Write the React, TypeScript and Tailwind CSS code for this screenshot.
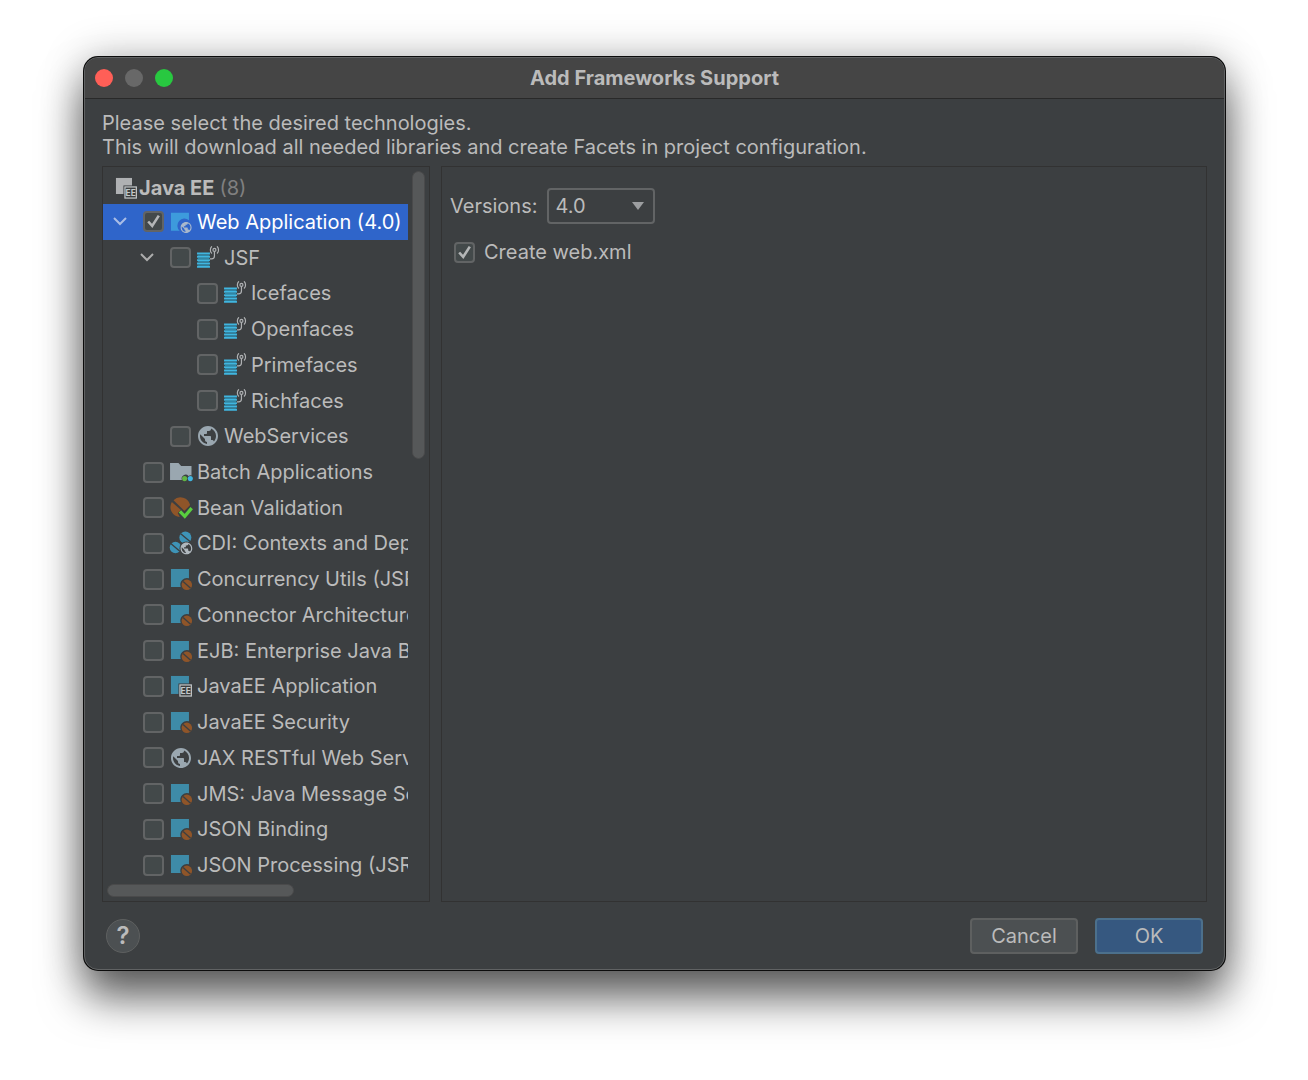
import React from 'react';
import { MdPublic } from 'react-icons/md';

type IconName = 'web' | 'jsf' | 'globe' | 'batch' | 'beanCheck' | 'cdi' | 'module' | 'moduleEE';

interface Technology {
  id: string;
  label: string;
  icon: IconName;
  level: 1 | 2 | 3;
  expanded?: boolean;
  checked?: boolean;
}

const technologies: Technology[] = [
  { id: 'web', label: 'Web Application (4.0)', icon: 'web', level: 1, expanded: true, checked: true },
  { id: 'jsf', label: 'JSF', icon: 'jsf', level: 2, expanded: true },
  { id: 'icefaces', label: 'Icefaces', icon: 'jsf', level: 3 },
  { id: 'openfaces', label: 'Openfaces', icon: 'jsf', level: 3 },
  { id: 'primefaces', label: 'Primefaces', icon: 'jsf', level: 3 },
  { id: 'richfaces', label: 'Richfaces', icon: 'jsf', level: 3 },
  { id: 'webservices', label: 'WebServices', icon: 'globe', level: 2 },
  { id: 'batch', label: 'Batch Applications', icon: 'batch', level: 1 },
  { id: 'validation', label: 'Bean Validation', icon: 'beanCheck', level: 1 },
  { id: 'cdi', label: 'CDI: Contexts and Dependency Injection', icon: 'cdi', level: 1 },
  { id: 'concurrency', label: 'Concurrency Utils (JSR 236)', icon: 'module', level: 1 },
  { id: 'connector', label: 'Connector Architecture (JSR 322)', icon: 'module', level: 1 },
  { id: 'ejb', label: 'EJB: Enterprise Java Beans', icon: 'module', level: 1 },
  { id: 'javaee', label: 'JavaEE Application', icon: 'moduleEE', level: 1 },
  { id: 'security', label: 'JavaEE Security', icon: 'module', level: 1 },
  { id: 'jax', label: 'JAX RESTful Web Services', icon: 'globe', level: 1 },
  { id: 'jms', label: 'JMS: Java Message Service', icon: 'module', level: 1 },
  { id: 'jsonb', label: 'JSON Binding', icon: 'module', level: 1 },
  { id: 'jsonp', label: 'JSON Processing (JSR 353)', icon: 'module', level: 1 },
];

const indents = { 1: 'pl-0', 2: 'pl-[27px]', 3: 'pl-[54px]' };

const EEBadge = ({ color }: { color: string }) => (
  <>
    <rect x="6.3" y="6.3" width="9.7" height="9.7" fill="#3c3f41" />
    <rect x="7.3" y="7.3" width="7.6" height="7.4" fill="none" stroke={color} strokeWidth="0.8" />
    <text x="11.1" y="13.1" textAnchor="middle" fontSize="5.6" fontWeight="700" fill={color}>EE</text>
  </>
);

const TechIcon = ({ name }: { name: IconName }) => {
  if (name === 'globe') return <MdPublic className="size-6 shrink-0 text-[#9aa7b0]" />;

  return (
    <svg viewBox="0 0 16 16" className="size-6 shrink-0" aria-hidden="true">
      {name === 'web' && (
        <>
          <path d="M1.3 1.8h12v5.1a4.6 4.6 0 0 0-6.2 6.9H1.3z" fill="#3d9bdc" />
          <svg x="7" y="7.2" width="8.8" height="8.8" viewBox="0 0 24 24">
            <MdPublic size={24} color="#a9b8cc" />
          </svg>
        </>
      )}
      {name === 'jsf' && (
        <>
          <path d="M0.7 5h8.6M0.7 7.2h8.6M0.7 9.4h8.6M0.7 11.6h8.6M0.7 13.8h8.6" stroke="#40b6e0" strokeWidth="1.3" />
          <path d="M1.2 6.1h7.6M1.2 8.3h7.6M1.2 10.5h7.6M1.2 12.7h7.6" stroke="#2f86a5" strokeWidth="1" />
          <g fill="none" stroke="#afb1b3" strokeWidth="0.8">
            <path d="M9.3 8.6h1.1a1.9 1.9 0 0 0 1.9-1.9V3.6" />
            <circle cx="12.3" cy="2.6" r="1" />
            <path d="M10.6 0.2a3.3 3.3 0 0 0 0 4.8M14 0.2a3.3 3.3 0 0 1 0 4.8" />
          </g>
        </>
      )}
      {name === 'batch' && (
        <>
          <path d="M0.7 2h5.6l1.8 2h6.9v6.3a2.6 2.6 0 0 0-2 .4 2.6 2.6 0 0 0-4.4 2.6H0.7z" fill="#9aa7b0" />
          <circle cx="10.4" cy="12.4" r="1.7" fill="#62b543" />
          <circle cx="14.2" cy="12.4" r="1.7" fill="#40b6e0" />
        </>
      )}
      {name === 'beanCheck' && (
        <>
          <path d="M3 2.8A6.6 6.6 0 0 1 14.1 6L10.2 10 9 8.6z" fill="#8f5529" />
          <path d="M1.9 4A6.6 6.6 0 0 0 7.2 14l-1.4-2.7 2.2-2z" fill="#8f5529" />
          <path d="M7.3 10.3l3.2 3.3 4.6-5.5" fill="none" stroke="#59cf3f" strokeWidth="2.2" />
        </>
      )}
      {name === 'cdi' && (
        <>
          <g fill="#3e94b8">
            <circle cx="10.9" cy="4.4" r="4" />
            <circle cx="4.3" cy="11" r="3.8" />
          </g>
          <path d="M7.6 1.6l6.6 5.6M1.2 8.4l6.2 5.2" stroke="#3c3f41" strokeWidth="0.9" />
          <circle cx="11.6" cy="11.6" r="4.6" fill="#3c3f41" />
          <svg x="6.9" y="6.9" width="9.4" height="9.4" viewBox="0 0 24 24">
            <MdPublic size={24} color="#b0b8be" />
          </svg>
        </>
      )}
      {name === 'module' && (
        <>
          <path d="M1.3 1.3h12v6.2a4.5 4.5 0 0 0-5.5 5.8H1.3z" fill="#3e8ba8" />
          <circle cx="11.9" cy="11.9" r="3.5" fill="#8f5529" />
          <path d="M9.4 9.6l5 4.6" stroke="#3c3f41" strokeWidth="0.9" />
        </>
      )}
      {name === 'moduleEE' && (
        <>
          <rect x="1.3" y="1.3" width="12" height="12" fill="#3e8ba8" />
          <EEBadge color="#c4c8ca" />
        </>
      )}
    </svg>
  );
};

interface CheckBoxProps {
  id: string;
  checked?: boolean;
}

const CheckBox: React.FC<CheckBoxProps> = ({ id, checked }) => (
  <span className="relative size-[21px] shrink-0">
    <input
      id={id}
      type="checkbox"
      defaultChecked={checked}
      className="peer block size-full appearance-none rounded-[4px] border-2 border-[#626465] bg-[#43494a]"
    />
    <svg viewBox="0 0 21 21" className="pointer-events-none absolute inset-0 hidden peer-checked:block" aria-hidden="true">
      <path d="M5.2 10.5l4 4.4L15.8 4.6" fill="none" stroke="#b4b6b7" strokeWidth="2.6" />
    </svg>
  </span>
);

const TechnologyRow = ({ tech, selected }: { tech: Technology; selected: boolean }) => (
  <li className={`flex flex-1 items-center ${selected ? 'bg-[#2f65ca] text-white' : ''}`}>
    <div className={`flex items-center ${indents[tech.level]}`}>
      <span className="mr-1.5 flex w-[34px] justify-center">
        {tech.expanded && (
          <svg viewBox="0 0 14 10" className="w-3.5" aria-hidden="true">
            <path d="M1 1l6 6 6-6" fill="none" stroke={selected ? '#a9bde6' : '#adadad'} strokeWidth="2" />
          </svg>
        )}
      </span>
      <CheckBox id={tech.id} checked={tech.checked} />
      <label htmlFor={tech.id} className="ml-[5px] flex items-center gap-1 whitespace-nowrap">
        <TechIcon name={tech.icon} />
        {tech.label}
      </label>
    </div>
  </li>
);

const TitleBar = () => (
  <header className="relative flex h-[41px] items-center gap-3 border-b border-[#292929] bg-[#454545] px-2.5">
    <button aria-label="Close" className="size-[18px] rounded-full bg-[#ff5f57]" />
    <button aria-label="Minimize" className="size-[18px] rounded-full bg-[#686868]" />
    <button aria-label="Zoom" className="size-[18px] rounded-full bg-[#28c840]" />
    <h1 className="pointer-events-none absolute inset-x-0 text-center font-bold">Add Frameworks Support</h1>
  </header>
);

const TechnologyTree = () => (
  <section className="flex flex-col border border-[#323232]">
    <div className="flex">
      <div className="flex min-w-0 flex-1 flex-col overflow-hidden pt-1 pb-px">
        <div className="flex h-[33px] items-center gap-px pl-[11px]">
          <svg viewBox="0 0 16 16" className="size-6 shrink-0" aria-hidden="true">
            <rect x="1.3" y="1.3" width="10.7" height="10.7" fill="#afb1b3" />
            <EEBadge color="#c4c8ca" />
          </svg>
          <strong className="font-bold">Java EE</strong>
          <span className="ml-1 text-[#808080]">(8)</span>
        </div>
        <ul className="flex h-[679px] flex-col">
          {technologies.map((tech) => (
            <TechnologyRow key={tech.id} tech={tech} selected={tech.id === 'web'} />
          ))}
        </ul>
      </div>
      <div className="w-[21px] px-1 pt-1">
        <div className="h-[288px] rounded-full border border-[#4a4a4b] bg-[#565859]" />
      </div>
    </div>
    <div className="px-1 pb-1">
      <div className="h-[13px] w-[187px] rounded-full border border-[#4a4a4b] bg-[#565859]" />
    </div>
  </section>
);

const FacetSettings = () => (
  <section className="flex flex-col gap-4 border border-[#323232] px-2 pt-[21px]">
    <div className="flex items-center gap-[9px]">
      <label htmlFor="version">Versions:</label>
      <div className="relative">
        <select
          id="version"
          className="block h-9 w-[108px] appearance-none rounded-[4px] border-2 border-[#626465] bg-[#3c3f41] px-[7px]"
        >
          <option>4.0</option>
        </select>
        <svg viewBox="0 0 12 8" className="pointer-events-none absolute top-3.5 right-[11px] w-3" aria-hidden="true">
          <path d="M0 0h12L6 8z" fill="#9c9ea0" />
        </svg>
      </div>
    </div>
    <div className="flex items-center gap-[9px] pl-1">
      <CheckBox id="web-xml" checked />
      <label htmlFor="web-xml">Create web.xml</label>
    </div>
  </section>
);

const App: React.FC = () => (
  <main className="min-h-screen bg-white pt-[57px] pr-[83px] pb-[109px] pl-[84px] font-['Inter',sans-serif] text-xl leading-6 text-[#bbbbbb]">
    <div className="overflow-hidden rounded-[14px] border border-[#606263] bg-[#3c3f41] shadow-[0_0_0_1px_#0c0c0c,0_28px_44px_rgba(0,0,0,0.6),0_0_40px_rgba(0,0,0,0.25)]">
      <TitleBar />
      <div className="px-[17px] pt-3 pb-[15px]">
        <p>Please select the desired technologies.</p>
        <p>This will download all needed libraries and create Facets in project configuration.</p>
        <div className="mt-[7px] grid grid-cols-[328px_1fr] gap-[11px]">
          <TechnologyTree />
          <FacetSettings />
        </div>
        <footer className="mt-4 flex items-center gap-[17px] px-1">
          <button
            aria-label="Help"
            className="mr-auto size-[34px] rounded-full border border-[#5e6060] bg-[#4c5052] text-2xl leading-6 font-semibold"
          >
            ?
          </button>
          <button className="h-9 w-[108px] rounded border-2 border-[#5e6060] bg-[#4c5052]">Cancel</button>
          <button className="h-9 w-[108px] rounded border-2 border-[#4c708c] bg-[#365880]">OK</button>
        </footer>
      </div>
    </div>
  </main>
);

export default App;
